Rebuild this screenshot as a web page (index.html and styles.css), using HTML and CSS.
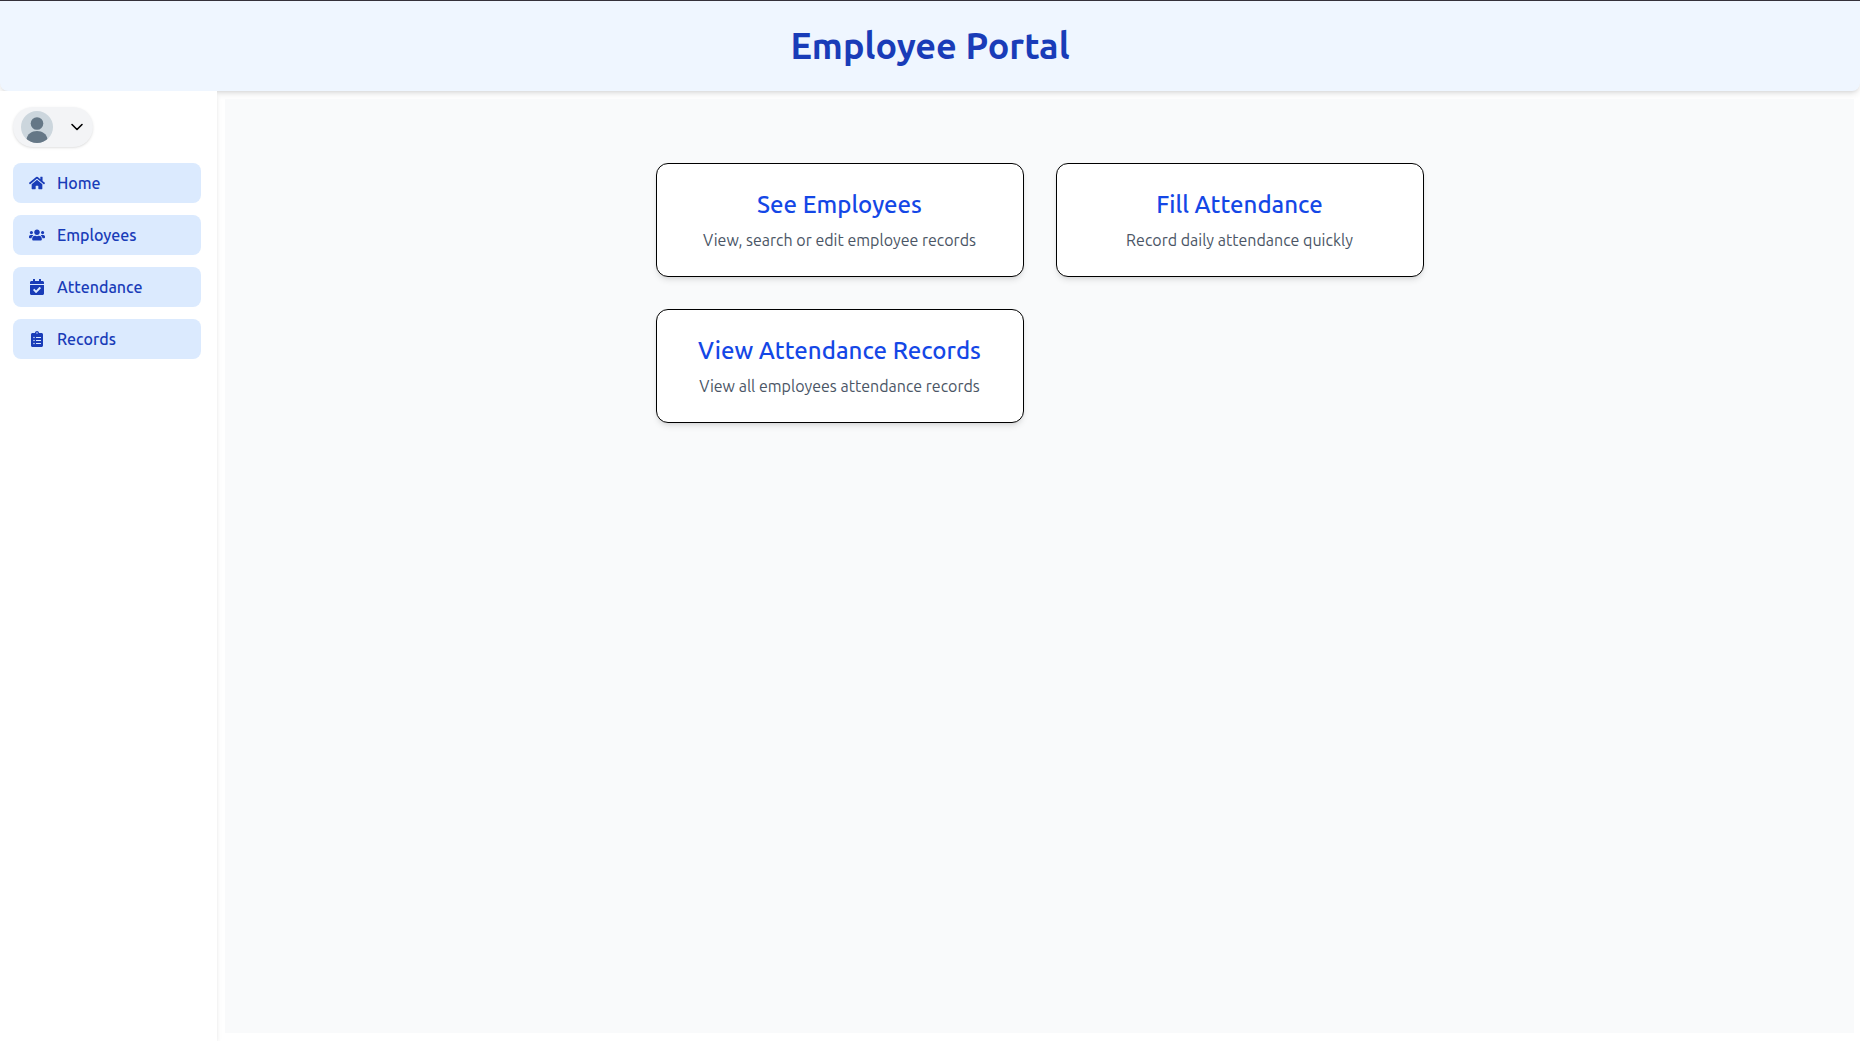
FILE: index.html
```html
<!DOCTYPE html>
<html lang="en">
<head>
<meta charset="utf-8">
<meta name="viewport" content="width=device-width, initial-scale=1">
<title>Employee Portal</title>
<link rel="stylesheet" href="styles.css">
</head>
<body>
<header class="header"><h1 class="title">Employee Portal</h1></header>
<div class="shell">
  <aside class="sidebar">
    <button class="profile" type="button" aria-label="Account menu">
      <svg class="avatar" viewBox="0 0 32 32" aria-hidden="true">
        <defs><clipPath id="disc"><circle cx="16" cy="16" r="16"/></clipPath></defs>
        <g clip-path="url(#disc)">
          <rect width="32" height="32" fill="#ccd6dd"/>
          <circle cx="16" cy="12.5" r="6.3" fill="#657786"/>
          <path d="M5.6 28c.6-4.800 5-8 10.400-8s9.800 3.200 10.400 8v4H5.600z" fill="#657786"/>
        </g>
      </svg>
      <svg class="chevron" viewBox="0 0 16 16" aria-hidden="true"><path d="M3 5.500l5 5 5-5" fill="none" stroke="currentColor" stroke-width="1.600" stroke-linecap="round" stroke-linejoin="round"/></svg>
    </button>
    <nav class="nav">
      <a class="link" href="#home">
        <svg class="icon" viewBox="0 0 576 512" aria-hidden="true"><path d="M280.370 148.260L96 300.110V464a16 16 0 0 0 16 16l112.060-.290a16 16 0 0 0 15.920-16V368a16 16 0 0 1 16-16h64a16 16 0 0 1 16 16v95.640a16 16 0 0 0 16 16.050L464 480a16 16 0 0 0 16-16V300L295.670 148.260a12.190 12.190 0 0 0-15.300 0zM571.600 251.470L488 182.560V44.050a12 12 0 0 0-12-12h-56a12 12 0 0 0-12 12v72.610L318.470 43a48 48 0 0 0-61 0L4.340 251.470a12 12 0 0 0-1.600 16.900l25.500 31A12 12 0 0 0 45.150 301l235.220-193.740a12.190 12.190 0 0 1 15.300 0L530.900 301a12 12 0 0 0 16.900-1.600l25.500-31a12 12 0 0 0-1.700-16.930z"/></svg>
        Home
      </a>
      <a class="link" href="#employees">
        <svg class="icon" viewBox="0 0 640 512" aria-hidden="true"><path d="M96 224c35.300 0 64-28.700 64-64s-28.700-64-64-64-64 28.700-64 64 28.700 64 64 64zm448 0c35.300 0 64-28.700 64-64s-28.700-64-64-64-64 28.700-64 64 28.700 64 64 64zm32 32h-64c-17.600 0-33.500 7.100-45.100 18.600 40.300 22.100 68.900 62 75.100 109.400h66c17.700 0 32-14.300 32-32v-32c0-35.300-28.700-64-64-64zm-256 0c61.900 0 112-50.100 112-112S381.900 32 320 32 208 82.100 208 144s50.100 112 112 112zm76.800 32h-8.300c-20.800 10-43.900 16-68.500 16s-47.600-6-68.500-16h-8.300C179.600 288 128 339.600 128 403.200V432c0 26.500 21.500 48 48 48h288c26.500 0 48-21.500 48-48v-28.800c0-63.600-51.600-115.200-115.200-115.200zm-223.700-13.400C161.500 263.100 145.600 256 128 256H64c-35.300 0-64 28.700-64 64v32c0 17.700 14.300 32 32 32h65.900c6.300-47.400 34.900-87.300 75.200-109.400z"/></svg>
        Employees
      </a>
      <a class="link" href="#attendance">
        <svg class="icon" viewBox="0 0 448 512" aria-hidden="true"><path d="M436 160H12c-6.627 0-12-5.373-12-12v-36c0-26.510 21.490-48 48-48h48V12c0-6.627 5.373-12 12-12h40c6.627 0 12 5.373 12 12v52h128V12c0-6.627 5.373-12 12-12h40c6.627 0 12 5.373 12 12v52h48c26.510 0 48 21.490 48 48v36c0 6.627-5.373 12-12 12zM12 192h424c6.627 0 12 5.373 12 12v260c0 26.510-21.490 48-48 48H48c-26.510 0-48-21.490-48-48V204c0-6.627 5.373-12 12-12zm333.296 95.947l-28.169-28.398c-4.667-4.705-12.265-4.736-16.970-.068L194.120 364.665l-45.980-46.352c-4.667-4.705-12.265-4.736-16.970-.068l-28.397 28.169c-4.705 4.667-4.736 12.265-.068 16.970l82.601 83.269c4.667 4.705 12.265 4.736 16.970.068l142.953-141.805c4.704-4.667 4.735-12.265.067-16.969z"/></svg>
        Attendance
      </a>
      <a class="link" href="#records">
        <svg class="icon" viewBox="0 0 384 512" aria-hidden="true"><path d="M336 64h-80c0-35.300-28.700-64-64-64s-64 28.700-64 64H48C21.500 64 0 85.500 0 112v352c0 26.500 21.500 48 48 48h288c26.500 0 48-21.500 48-48V112c0-26.500-21.500-48-48-48zM96 424c-13.300 0-24-10.700-24-24s10.700-24 24-24 24 10.700 24 24-10.700 24-24 24zm0-96c-13.300 0-24-10.700-24-24s10.700-24 24-24 24 10.700 24 24-10.700 24-24 24zm0-96c-13.300 0-24-10.700-24-24s10.700-24 24-24 24 10.700 24 24-10.700 24-24 24zm96-192c13.300 0 24 10.700 24 24s-10.700 24-24 24-24-10.700-24-24 10.700-24 24-24zm128 368c0 4.400-3.600 8-8 8H168c-4.400 0-8-3.600-8-8v-16c0-4.400 3.600-8 8-8h144c4.400 0 8 3.600 8 8v16zm0-96c0 4.400-3.600 8-8 8H168c-4.400 0-8-3.600-8-8v-16c0-4.400 3.600-8 8-8h144c4.400 0 8 3.600 8 8v16zm0-96c0 4.400-3.600 8-8 8H168c-4.400 0-8-3.600-8-8v-16c0-4.400 3.600-8 8-8h144c4.400 0 8 3.600 8 8v16z"/></svg>
        Records
      </a>
    </nav>
  </aside>
  <main class="main">
    <div class="panel">
      <div class="cards">
        <a class="card" href="#employees"><h2 class="card-title">See Employees</h2><p class="card-text">View, search or edit employee records</p></a>
        <a class="card" href="#attendance"><h2 class="card-title">Fill Attendance</h2><p class="card-text">Record daily attendance quickly</p></a>
        <a class="card" href="#records"><h2 class="card-title">View Attendance Records</h2><p class="card-text">View all employees attendance records</p></a>
      </div>
    </div>
  </main>
</div>
</body>
</html>
```
FILE: styles.css
```css
*, *::before, *::after { box-sizing: border-box; }

body {
  margin: 0;
  min-height: 100vh;
  display: flex;
  flex-direction: column;
  border-top: 1px solid #34313a;
  background: #fff;
  font: 400 16px/24px Ubuntu, "Noto Sans", sans-serif;
}

h1, h2, p { margin: 0; }
a { color: inherit; text-decoration: none; }

.header {
  padding: 24px;
  border-radius: 0 0 8px 8px;
  background: #eff6ff;
  box-shadow: 0 4px 6px -1px rgb(0 0 0 / 0.1), 0 2px 4px -2px rgb(0 0 0 / 0.1);
  text-align: center;
}
.title { color: #193cb8; font-size: 36px; font-weight: 600; line-height: 42px; }

.shell { flex: 1; display: flex; }

.sidebar {
  position: relative;
  flex: none;
  width: 217px;
  padding: 16px 16px 16px 13px;
  background: #fff;
  box-shadow: 0 4px 6px -1px rgb(0 0 0 / 0.1), 0 2px 4px -2px rgb(0 0 0 / 0.1);
  clip-path: inset(0 -8px 0 0);
}

.profile {
  display: flex;
  align-items: center;
  gap: 16px;
  padding: 4px 8px;
  border: 0;
  border-radius: 20px;
  background: #f3f4f6;
  color: #000;
  box-shadow: 0 1px 3px rgb(0 0 0 / 0.1), 0 1px 2px -1px rgb(0 0 0 / 0.1);
  cursor: pointer;
}
.avatar { width: 32px; height: 32px; }
.chevron { width: 16px; height: 16px; }

.nav { display: flex; flex-direction: column; gap: 12px; margin-top: 16px; }
.link {
  display: flex;
  align-items: center;
  gap: 12px;
  padding: 8px 16px;
  border-radius: 8px;
  background: #dbeafe;
  color: #193cb8;
  font-weight: 500;
}
.icon { width: 16px; height: 16px; fill: currentColor; }

.main { flex: 1; display: flex; padding: 8px 6px 8px 8px; }
.panel { flex: 1; padding: 64px 24px; background: #f9fafb; }
.cards {
  display: grid;
  grid-template-columns: repeat(2, 1fr);
  gap: 32px;
  max-width: 768px;
  margin: 0 auto;
}
.card {
  padding: 24px;
  border: 1px solid #000;
  border-radius: 12px;
  background: #fff;
  box-shadow: 0 4px 6px -1px rgb(0 0 0 / 0.1), 0 2px 4px -2px rgb(0 0 0 / 0.1);
  text-align: center;
}
.card-title { margin-bottom: 6px; color: #1447e6; font-size: 24px; font-weight: 500; line-height: 34px; }
.card-text { color: #4a5565; font-size: 16px; font-weight: 400; }
```
